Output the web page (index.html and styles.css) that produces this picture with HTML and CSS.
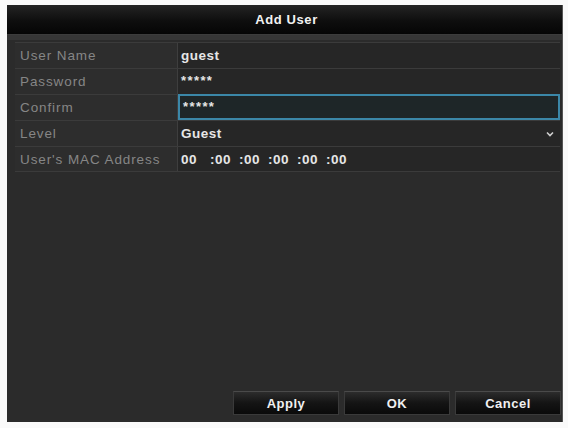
FILE: index.html
```html
<!DOCTYPE html>
<html>
<head>
<meta charset="utf-8">
<link rel="stylesheet" href="styles.css">
</head>
<body>
<div class="dialog">
  <div class="title">Add User</div>
  <div class="strip"></div>
  <div class="form">
    <div class="row">
      <div class="label">User Name</div>
      <div class="value">guest</div>
    </div>
    <div class="row">
      <div class="label">Password</div>
      <div class="value stars">*****</div>
    </div>
    <div class="row">
      <div class="label">Confirm</div>
      <div class="value stars focus">*****</div>
    </div>
    <div class="row">
      <div class="label">Level</div>
      <div class="value select">
        <span>Guest</span>
        <svg class="chev" width="8" height="6" viewBox="0 0 8 6"><path d="M1 1.5 L4 4.5 L7 1.5" fill="none" stroke="#cfcfcf" stroke-width="1.6"/></svg>
      </div>
    </div>
    <div class="row">
      <div class="label">User's MAC Address</div>
      <div class="value mac">
        <span class="oct">00</span><span class="oct">:00</span><span class="oct">:00</span><span class="oct">:00</span><span class="oct">:00</span><span class="oct">:00</span>
      </div>
    </div>
  </div>
  <div class="spacer"></div>
  <div class="buttons">
    <button class="btn">Apply</button>
    <button class="btn">OK</button>
    <button class="btn">Cancel</button>
  </div>
</div>
</body>
</html>
```
FILE: styles.css
```css
html, body {
  margin: 0;
  padding: 0;
  background: #fafafa;
}
body {
  padding: 5px 5px 6px 7px;
  font-family: "Liberation Sans", Arial, sans-serif;
}
.dialog {
  width: 556px;
  height: 417px;
  background: #2b2b2b;
  display: flex;
  flex-direction: column;
  box-sizing: border-box;
  border-right: 1px solid #555;
}
.title {
  height: 29px;
  background: linear-gradient(#242424, #0e0e0e 55%, #050505);
  color: #f2f2f2;
  font-weight: bold;
  font-size: 13px;
  letter-spacing: 0.6px;
  display: flex;
  align-items: center;
  justify-content: center;
  padding-left: 4px;
}
.strip {
  height: 6px;
  background: #363636;
  border-top: 1px solid #3c3c3c;
  box-sizing: border-box;
}
.form {
  margin: 2px 2px 0 8px;
  display: flex;
  flex-direction: column;
}
.row {
  height: 26px;
  display: flex;
  border-top: 1px solid #3b3b3b;
  box-sizing: border-box;
}
.row:last-child {
  border-bottom: 1px solid #3b3b3b;
}
.label {
  width: 163px;
  box-sizing: border-box;
  padding-left: 5px;
  display: flex;
  align-items: center;
  color: #868686;
  font-size: 13.5px;
  letter-spacing: 0.9px;
  border-right: 1px solid #3e3e3e;
  background: #2d2d2d;
  white-space: nowrap;
}
.value {
  flex: 1;
  display: flex;
  align-items: center;
  padding-left: 3px;
  color: #e6e6e6;
  font-weight: bold;
  font-size: 13.5px;
  letter-spacing: 0.5px;
  background: #262626;
}
.stars {
  font-size: 13px;
  letter-spacing: 1.4px;
  padding-bottom: 2px;
}
.focus {
  border: 2px solid #3b87a8;
  margin-top: -1px;
  background: #1e2628;
}
.select {
  justify-content: space-between;
  padding-right: 6px;
}
.chev {
  display: block;
}
.mac .oct {
  width: 29px;
}
.spacer {
  flex: 1;
}
.buttons {
  display: flex;
  justify-content: flex-end;
  gap: 5px;
  padding: 0 1px 7px 0;
}
.btn {
  width: 106px;
  height: 24px;
  background: linear-gradient(#2c2c2c, #141414 50%, #0a0a0a);
  border: 1px solid #3a3a3a;
  border-top-color: #4a4a4a;
  color: #f0f0f0;
  font-family: "Liberation Sans", Arial, sans-serif;
  font-weight: bold;
  font-size: 13px;
  letter-spacing: 0.5px;
  padding: 0;
}
```
